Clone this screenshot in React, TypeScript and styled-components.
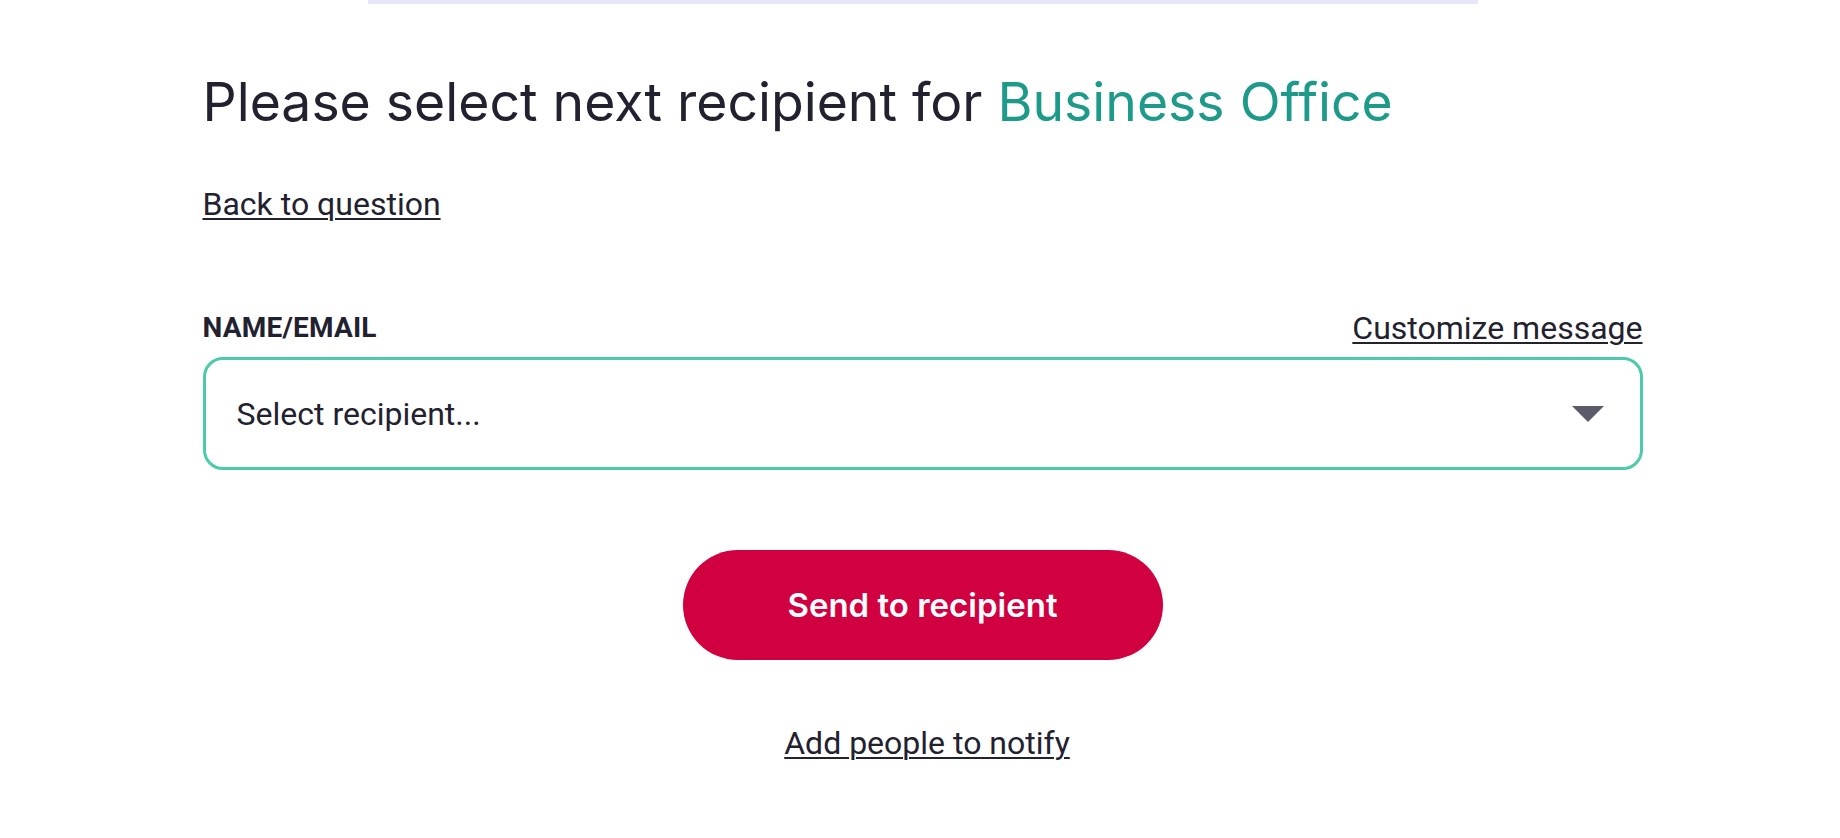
import React from "react";
import styled, { createGlobalStyle } from "styled-components";

const GlobalStyle = createGlobalStyle`
  html, body {
    margin: 0;
    padding: 0;
    background: #ffffff;
  }
  body {
    font-family: Roboto, "Liberation Sans", sans-serif;
    color: #22212f;
  }
`;

const HEADING_FONT = `Inter, "Liberation Sans", sans-serif`;

const Page = styled.div`
  display: flex;
  flex-direction: column;
  align-items: center;
  padding-left: 5px;
  min-height: 838px;
  box-sizing: border-box;
`;

const TopBar = styled.div`
  width: 1110px;
  height: 4px;
  background-color: #e6e6f8;
`;

const Content = styled.main`
  display: flex;
  flex-direction: column;
  width: 1440px;
`;

const Heading = styled.h1`
  margin: 66px 0 0;
  font-family: ${HEADING_FONT};
  font-size: 53.5px;
  font-weight: 400;
  line-height: 64px;
  color: #22212f;
`;

const Accent = styled.span`
  color: #1e9a8a;
`;

const TextLink = styled.a`
  font-size: 32px;
  line-height: 40px;
  color: #22212f;
  text-decoration: underline;
  text-underline-offset: 3px;
  text-decoration-thickness: 2px;
  cursor: pointer;
`;

const BackRow = styled.div`
  margin-top: 50px;
`;

const LabelRow = styled.div`
  display: flex;
  justify-content: space-between;
  align-items: flex-end;
  margin-top: 84px;
`;

const Label = styled.label`
  padding-bottom: 2px;
  font-size: 28px;
  font-weight: 700;
  line-height: 36px;
  letter-spacing: 0.2px;
`;

const SelectBox = styled.div`
  display: flex;
  align-items: center;
  justify-content: space-between;
  box-sizing: border-box;
  height: 113px;
  margin-top: 9px;
  padding: 0 36px 0 31px;
  border: 3px solid #4ccaab;
  border-radius: 20px;
  font-size: 32px;
  cursor: pointer;
`;

const Placeholder = styled.span`
  line-height: 40px;
  padding-top: 0;
`;

const Caret = styled.svg`
  width: 32px;
  height: 16px;
  flex-shrink: 0;
`;

const Actions = styled.div`
  display: flex;
  flex-direction: column;
  align-items: center;
  margin-top: 80px;
`;

const SendButton = styled.button`
  width: 480px;
  height: 110px;
  border: none;
  border-radius: 55px;
  background-color: #d10041;
  color: #ffffff;
  font-family: ${HEADING_FONT};
  font-size: 33px;
  font-weight: 600;
  cursor: pointer;
`;

const NotifyRow = styled.div`
  margin-top: 63px;
  padding-left: 9px;
`;

const App: React.FC = () => {
  return (
    <>
      <GlobalStyle />
      <Page>
        <TopBar />
        <Content>
          <Heading>
            Please select next recipient for <Accent>Business Office</Accent>
          </Heading>
          <BackRow>
            <TextLink>Back to question</TextLink>
          </BackRow>
          <LabelRow>
            <Label>NAME/EMAIL</Label>
            <TextLink>Customize message</TextLink>
          </LabelRow>
          <SelectBox>
            <Placeholder>Select recipient...</Placeholder>
            <Caret viewBox="0 0 32 16">
              <path d="M0 0 H32 L16 16 Z" fill="#5c5b69" />
            </Caret>
          </SelectBox>
          <Actions>
            <SendButton>Send to recipient</SendButton>
            <NotifyRow>
              <TextLink>Add people to notify</TextLink>
            </NotifyRow>
          </Actions>
        </Content>
      </Page>
    </>
  );
};

export default App;
